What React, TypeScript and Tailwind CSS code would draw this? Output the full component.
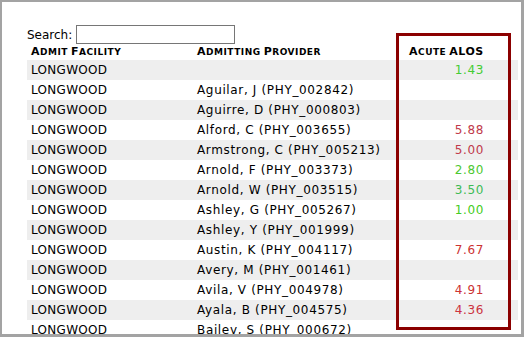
const rows: { provider: string; alos?: string; color?: string }[] = [
  { provider: "", alos: "1.43", color: "text-[#44cc33]" },
  { provider: "Aguilar, J (PHY_002842)" },
  { provider: "Aguirre, D (PHY_000803)" },
  { provider: "Alford, C (PHY_003655)", alos: "5.88", color: "text-[#c0394a]" },
  { provider: "Armstrong, C (PHY_005213)", alos: "5.00", color: "text-[#c0394a]" },
  { provider: "Arnold, F (PHY_003373)", alos: "2.80", color: "text-[#4cc830]" },
  { provider: "Arnold, W (PHY_003515)", alos: "3.50", color: "text-[#3dbb55]" },
  { provider: "Ashley, G (PHY_005267)", alos: "1.00", color: "text-[#44cc22]" },
  { provider: "Ashley, Y (PHY_001999)" },
  { provider: "Austin, K (PHY_004117)", alos: "7.67", color: "text-[#cc3333]" },
  { provider: "Avery, M (PHY_001461)" },
  { provider: "Avila, V (PHY_004978)", alos: "4.91", color: "text-[#cc3333]" },
  { provider: "Ayala, B (PHY_004575)", alos: "4.36", color: "text-[#cc3340]" },
  { provider: "Bailey, S (PHY_000672)" },
];

// small caps with bigger lowercase than the browser's synthesized ones
function Caps({ text }: { text: string }) {
  return (
    <span className="tracking-[0.5px]">
      {text.split(" ").map((w, i) => (
        <span key={i} className={i > 0 ? "ml-[3px]" : ""}>
          <span className="text-[11px]">{w[0]}</span>
          {w.slice(1).split("").map((c, j) =>
            c === c.toUpperCase() ? (
              <span key={j} className="text-[11px]">{c}</span>
            ) : (
              <span key={j} className="text-[9px]">{c.toUpperCase()}</span>
            )
          )}
        </span>
      ))}
    </span>
  );
}

export default function App() {
  return (
    <div className="w-[524px] h-[337px] bg-[#a3a3a3] pl-[2px] pt-[2px] pr-[3px] pb-[3px]">
      <div
        className="relative w-full h-full bg-white overflow-hidden text-black"
        style={{ fontFamily: '"DejaVu Sans", Verdana, sans-serif' }}
      >
        {/* SEARCH */}
        <div className="flex items-center gap-[4px] pl-[25px] pt-[23px] text-[12px] leading-none">
          <span className="pt-[1px]">Search:</span>
          <input
            type="text"
            className="w-[159px] h-[19px] border border-[#767676] bg-white outline-none"
          />
        </div>

        {/* TABLE */}
        <div className="ml-[25px] w-[491px]">
          <div className="flex h-[16px] items-end pb-[2px] font-bold leading-none whitespace-nowrap">
            <div className="w-[166px] pl-[4px]"><Caps text="Admit Facility" /></div>
            <div className="w-[212px] pl-[4px]"><Caps text="Admitting Provider" /></div>
            <div className="w-[82px] pl-[4px]"><Caps text="Acute ALOS" /></div>
          </div>
          {rows.map((r, i) => (
            <div
              key={i}
              className={`flex h-[20px] items-center text-[12px] leading-[20px] ${
                i % 2 === 0 ? "bg-[#eeeeee]" : "bg-white"
              }`}
            >
              <div className="w-[166px] pl-[4px] tracking-[0.3px]">LONGWOOD</div>
              <div className="w-[212px] pl-[4px] tracking-[0.65px] whitespace-nowrap">{r.provider}</div>
              <div className={`w-[82px] pr-[3px] text-right tracking-[0.65px] ${r.color ?? ""}`}>
                {r.alos ?? ""}
              </div>
            </div>
          ))}
        </div>

        {/* HIGHLIGHT BOX */}
        <div className="absolute left-[394px] top-[31px] w-[115px] h-[297px] border-[3px] border-[#8b0000]" />
      </div>
    </div>
  );
}
